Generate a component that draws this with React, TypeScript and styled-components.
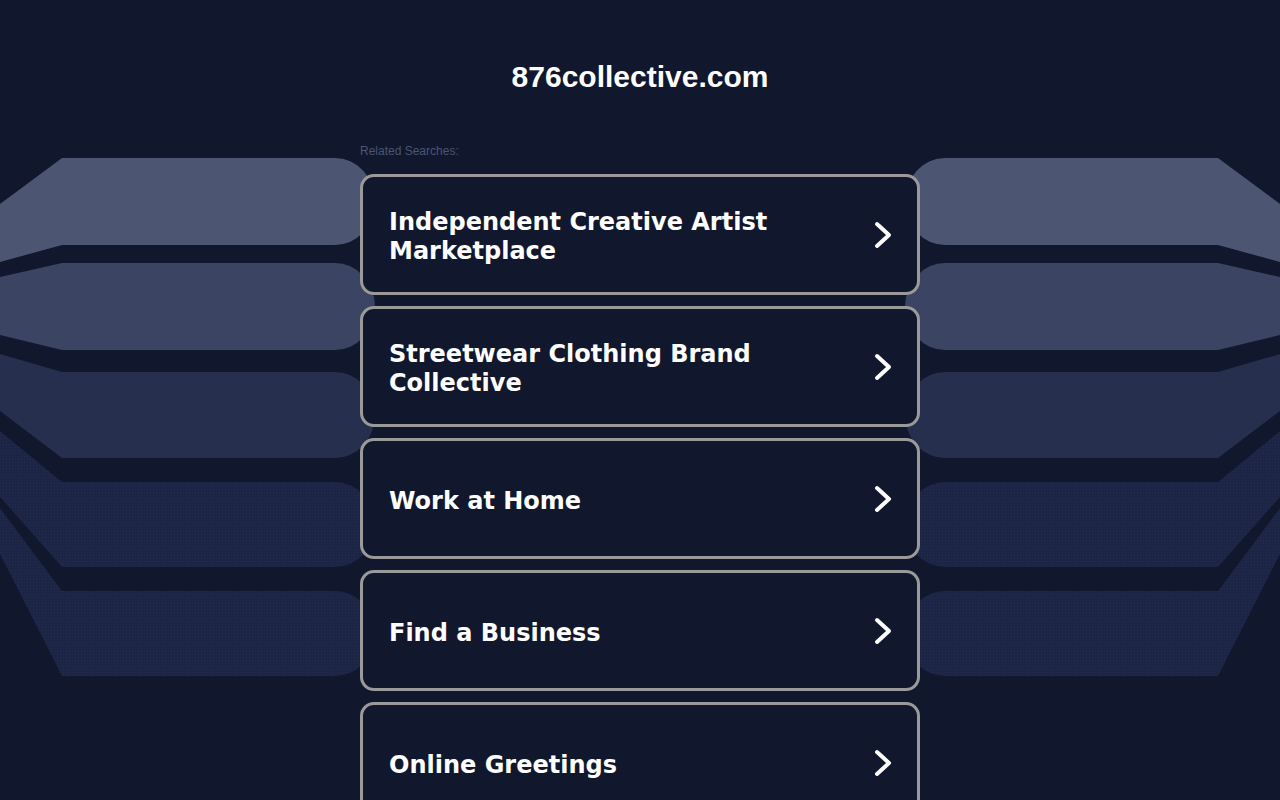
import styled, { createGlobalStyle } from "styled-components";

const GlobalStyle = createGlobalStyle`
  html {
    scrollbar-width: none;
  }
  html::-webkit-scrollbar {
    display: none;
  }
  body {
    margin: 0;
    background: #11172c;
    font-family: "Liberation Sans", Arial, sans-serif;
  }
`;

const Page = styled.div`
  position: relative;
  min-height: 100vh;
  overflow: hidden;
`;

const Backdrop = styled.svg`
  position: absolute;
  top: 0;
  left: 0;
  width: 1280px;
  height: 800px;
  z-index: 0;
  pointer-events: none;
`;

const Content = styled.div`
  position: relative;
  z-index: 1;
  display: flex;
  flex-direction: column;
  align-items: center;
`;

const Header = styled.header`
  padding-top: 59px;
`;

const Title = styled.h1`
  margin: 0;
  font-family: "Liberation Sans", Arial, sans-serif;
  font-size: 30px;
  line-height: 36px;
  font-weight: 700;
  color: #ffffff;
  text-align: center;
`;

const Main = styled.main`
  width: 560px;
  margin-top: 49px;
`;

const Label = styled.div`
  font-size: 12px;
  line-height: 14px;
  color: #4a5675;
  margin-bottom: 16px;
`;

const List = styled.div`
  display: flex;
  flex-direction: column;
  gap: 11px;
`;

const Card = styled.a`
  box-sizing: border-box;
  height: 121px;
  display: flex;
  align-items: center;
  justify-content: space-between;
  padding: 0 22px 0 26px;
  background: #11172c;
  border: 3px solid #9a9a9a;
  border-radius: 14px;
  color: #ffffff;
  text-decoration: none;
`;

const CardText = styled.span`
  font-family: "DejaVu Sans", Verdana, sans-serif;
  font-weight: 700;
  font-size: 24px;
  line-height: 29px;
  max-width: 440px;
  padding-top: 5px;
`;

const Chevron = styled.svg`
  flex-shrink: 0;
  width: 22px;
  height: 30px;
  margin-top: 1px;
`;

type Band = { top: number; bot: number; yTL: number; yBL: number; fill: string; dotted?: boolean };

const bands: Band[] = [
  { top: 158, bot: 245, yTL: 204, yBL: 262, fill: "#4c5673" },
  { top: 263, bot: 350, yTL: 277, yBL: 335, fill: "#3b4462" },
  { top: 372, bot: 458, yTL: 354, yBL: 411, fill: "#272f4e" },
  { top: 482, bot: 567, yTL: 431, yBL: 497, fill: "#1c2545", dotted: true },
  { top: 591, bot: 676, yTL: 508, yBL: 554, fill: "#1c2545", dotted: true },
];

function bandPath(b: Band, mirror: boolean) {
  const x = (v: number) => (mirror ? 1280 - v : v);
  const ry = (b.bot - b.top) / 2;
  const sweep = mirror ? 0 : 1;
  return `M ${x(0)} ${b.yTL} L ${x(62)} ${b.top} L ${x(335)} ${b.top} A 40 ${ry} 0 0 ${sweep} ${x(335)} ${b.bot} L ${x(62)} ${b.bot} L ${x(0)} ${b.yBL} Z`;
}

const searches = [
  "Independent Creative Artist Marketplace",
  "Streetwear Clothing Brand Collective",
  "Work at Home",
  "Find a Business",
  "Online Greetings",
];

function App() {
  return (
    <Page>
      <GlobalStyle />
      <Backdrop viewBox="0 0 1280 800">
        <defs>
          <pattern id="dots" width="3" height="3" patternUnits="userSpaceOnUse">
            <rect width="1" height="1" fill="rgba(255,255,255,0.035)" />
          </pattern>
        </defs>
        {bands.map((b, i) => (
          <g key={i}>
            <path d={bandPath(b, false)} fill={b.fill} />
            <path d={bandPath(b, true)} fill={b.fill} />
            {b.dotted && (
              <>
                <path d={bandPath(b, false)} fill="url(#dots)" />
                <path d={bandPath(b, true)} fill="url(#dots)" />
              </>
            )}
          </g>
        ))}
      </Backdrop>
      <Content>
        <Header>
          <Title>876collective.com</Title>
        </Header>
        <Main>
          <Label>Related Searches:</Label>
          <List>
            {searches.map((s) => (
              <Card key={s} href="#">
                <CardText>{s}</CardText>
                <Chevron viewBox="0 0 22 30">
                  <polyline
                    points="4,4 16,15 4,26"
                    fill="none"
                    stroke="#ffffff"
                    strokeWidth="4"
                    strokeLinecap="round"
                    strokeLinejoin="round"
                  />
                </Chevron>
              </Card>
            ))}
          </List>
        </Main>
      </Content>
    </Page>
  );
}

export default App;
